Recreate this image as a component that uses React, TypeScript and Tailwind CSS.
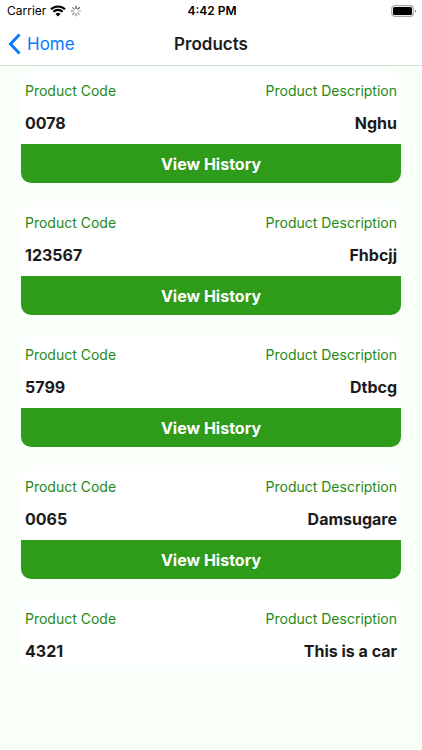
import React from "react";

const products = [
  { code: "0078", description: "Nghu", hasHistory: true },
  { code: "123567", description: "Fhbcjj", hasHistory: true },
  { code: "5799", description: "Dtbcg", hasHistory: true },
  { code: "0065", description: "Damsugare", hasHistory: true },
  { code: "4321", description: "This is a car", hasHistory: false },
];

function StatusBar() {
  return (
    <div className="grid h-[22px] grid-cols-3 items-center pr-[5px] pl-[7px] text-[12px] leading-4 text-black">
      <div className="flex items-center gap-1">
        <span>Carrier</span>
        <svg viewBox="0 0 16 12" className="h-3 w-4" aria-hidden="true">
          <path d="M8 11.5 5.5 9a3.500 3.500 0 0 1 5 0z" />
          <path d="M3.400 6.800a6.500 6.500 0 0 1 9.200 0M1 4.300a10 10 0 0 1 14 0" fill="none" stroke="black" strokeWidth="2.100" />
        </svg>
        <svg viewBox="0 0 12 12" className="h-3 w-3" fill="none" strokeWidth="1.200" strokeLinecap="round" aria-hidden="true">
          <path d="M6 1.200v2.300M9.400 2.600 7.800 4.200" stroke="#444" />
          <path d="M2.600 2.600l1.600 1.600M1.200 6h2.300" stroke="#777" />
          <path d="M2.600 9.400l1.600-1.600M6 10.800V8.500" stroke="#888" />
          <path d="M9.400 9.400 7.800 7.800M10.800 6H8.500" stroke="#aaa" />
        </svg>
      </div>
      <span className="text-center font-semibold">4:42 PM</span>
      <svg viewBox="0 0 26 12" className="h-3 w-[26px] justify-self-end" aria-hidden="true">
        <rect x="0.700" y="0.700" width="21.600" height="10.600" rx="3" fill="white" stroke="#a6a6a6" strokeWidth="1.200" />
        <rect x="2" y="2" width="19" height="8" rx="1.500" />
        <path d="M24 4.200a2 2 0 0 1 0 3.600z" fill="#888" />
      </svg>
    </div>
  );
}

export default function App() {
  return (
    <div className="flex h-screen flex-col bg-[#f9fff9] font-['Inter','Liberation_Sans',sans-serif]">
      <header className="border-b border-[#dcdcdc] bg-white">
        <StatusBar />
        <nav className="grid h-[43px] grid-cols-3 items-center px-2">
          <a href="#home" className="flex items-center gap-[6px] text-[17px] leading-6 text-[#0a7aff]">
            <svg viewBox="0 0 13 22" className="h-[22px] w-[13px]" fill="none" stroke="currentColor" strokeWidth="3" aria-hidden="true">
              <path d="M11.500 1.500 2.500 11l9 9.500" />
            </svg>
            Home
          </a>
          <h1 className="text-center text-[17px] leading-6 font-semibold text-[#1c1c1e]">Products</h1>
        </nav>
      </header>
      <main className="mb-[83px] flex min-h-0 flex-1 flex-col gap-5 overflow-hidden px-[21px] pt-[5px]">
        {products.map((product) => (
          <article key={product.code} className="shrink-0 overflow-hidden rounded-[10px] bg-white">
            <dl className="flex h-[73px] justify-between px-1 pt-2">
              <div>
                <dt className="text-[14px] leading-6 text-[#1f8a16]">Product Code</dt>
                <dd className="pt-2 text-[16px] leading-6 font-bold text-[#1b1b1b]">{product.code}</dd>
              </div>
              <div className="text-right">
                <dt className="text-[14px] leading-6 text-[#1f8a16]">Product Description</dt>
                <dd className="pt-2 text-[16px] leading-6 font-bold text-[#1b1b1b]">{product.description}</dd>
              </div>
            </dl>
            {product.hasHistory && (
              <button type="button" className="block h-[39px] w-full bg-[#2e9c1a] text-[16px] leading-6 font-bold text-white">
                View History
              </button>
            )}
          </article>
        ))}
      </main>
    </div>
  );
}
